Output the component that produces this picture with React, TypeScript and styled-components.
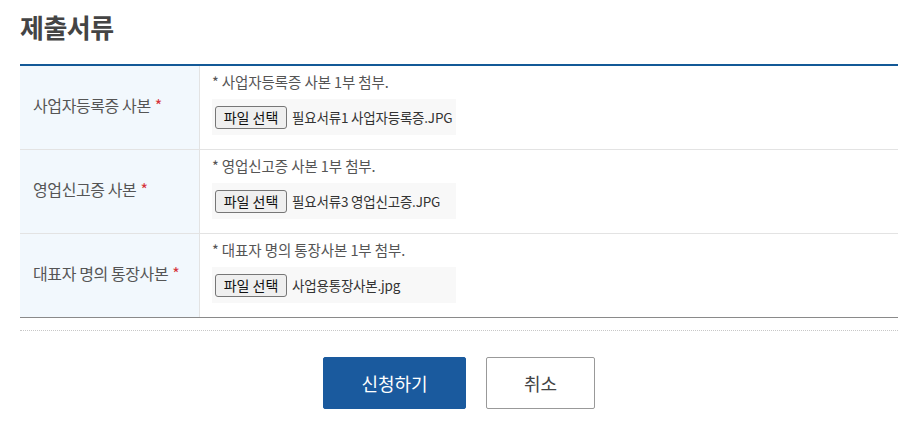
import React from "react";
import styled, { createGlobalStyle } from "styled-components";

const Global = createGlobalStyle`
  html, body { margin: 0; padding: 0; background: #fff; }
  body { font-family: "Noto Sans CJK KR", "Noto Sans", sans-serif; color: #333; }
  * { box-sizing: border-box; }
`;

const Page = styled.div`
  padding: 9px 14px 0 20px;
  width: 912px;
`;

const Title = styled.h2`
  margin: 0 0 20px;
  font-size: 26px;
  line-height: 35px;
  font-weight: 700;
  color: #444;
  letter-spacing: -0.5px;
`;

const Table = styled.div`
  border-top: 2px solid #135997;
  border-bottom: 1px solid #8a8a8a;
`;

const Row = styled.div<{ $last?: boolean }>`
  display: grid;
  grid-template-columns: 180px 1fr;
  height: ${(p) => (p.$last ? "83px" : "84px")};
  border-bottom: ${(p) => (p.$last ? "none" : "1px solid #e3e3e3")};
`;

const Th = styled.div`
  background: #f2f8fd;
  border-right: 1px solid #e3e3e3;
  display: flex;
  align-items: center;
  padding: 0 0 6px 13px;
  font-size: 16px;
  color: #555;
  letter-spacing: -0.4px;
`;

const Req = styled.span`
  color: #d6343a;
  margin-left: 4px;
`;

const Td = styled.div`
  padding: 5px 12px 0 12px;
  display: flex;
  flex-direction: column;
  gap: 6px;
`;

const Note = styled.div`
  font-size: 14.5px;
  line-height: 22px;
  color: #555;
  letter-spacing: -0.1px;
`;

const FileBox = styled.div`
  width: 244px;
  height: 36px;
  background: #f8f8f8;
  display: flex;
  align-items: center;
  padding-left: 3px;
  gap: 5px;
`;

const FileButton = styled.span`
  display: inline-flex;
  align-items: center;
  justify-content: center;
  height: 23px;
  width: 72px;
  background: #efefef;
  border: 1px solid #767676;
  border-radius: 3px;
  font-size: 14px;
  color: #111;
`;

const FileName = styled.span`
  font-size: 13.5px;
  color: #333;
  letter-spacing: -0.2px;
`;

const Dotted = styled.div`
  margin-top: 12px;
  border-top: 1px dotted #c8c8c8;
`;

const Actions = styled.div`
  display: flex;
  justify-content: center;
  gap: 20px;
  padding-top: 26px;
`;

const Btn = styled.button<{ $primary?: boolean }>`
  height: 52px;
  width: ${(p) => (p.$primary ? "143px" : "109px")};
  border-radius: 2px;
  font-family: inherit;
  font-size: 18px;
  cursor: pointer;
  background: ${(p) => (p.$primary ? "#1a5a9e" : "#fff")};
  color: ${(p) => (p.$primary ? "#fff" : "#444")};
  border: 1px solid ${(p) => (p.$primary ? "#1a5a9e" : "#999")};
`;

const rows = [
  { label: "사업자등록증 사본", note: "* 사업자등록증 사본 1부 첨부.", file: "필요서류1 사업자등록증.JPG" },
  { label: "영업신고증 사본", note: "* 영업신고증 사본 1부 첨부.", file: "필요서류3 영업신고증.JPG" },
  { label: "대표자 명의 통장사본", note: "* 대표자 명의 통장사본 1부 첨부.", file: "사업용통장사본.jpg" },
];

export default function App() {
  return (
    <Page>
      <Global />
      <Title>제출서류</Title>
      <Table>
        {rows.map((r, i) => (
          <Row key={r.label} $last={i === rows.length - 1}>
            <Th>
              {r.label}
              <Req>*</Req>
            </Th>
            <Td>
              <Note>{r.note}</Note>
              <FileBox>
                <FileButton>파일 선택</FileButton>
                <FileName>{r.file}</FileName>
              </FileBox>
            </Td>
          </Row>
        ))}
      </Table>
      <Dotted />
      <Actions>
        <Btn $primary>신청하기</Btn>
        <Btn>취소</Btn>
      </Actions>
    </Page>
  );
}
